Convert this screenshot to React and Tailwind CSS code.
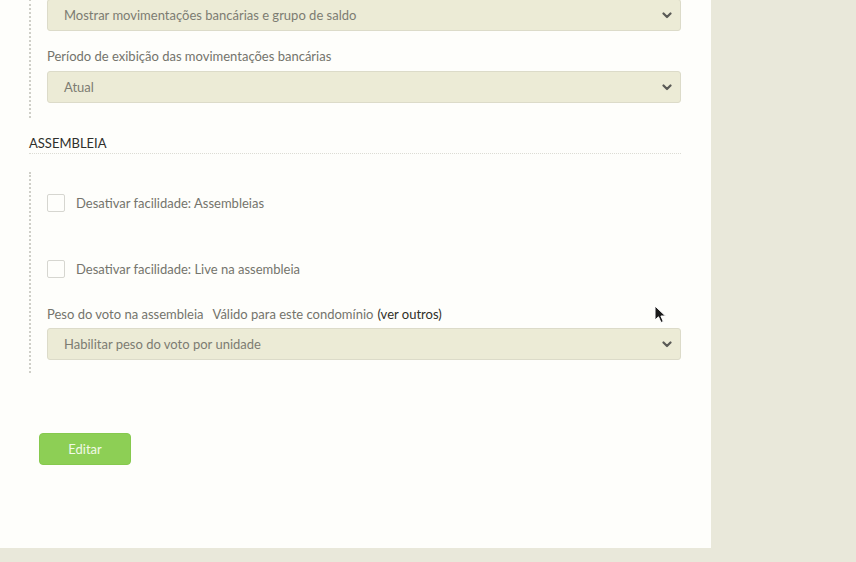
import React from "react";

function Chevron() {
  return (
    <svg width="10" height="7" viewBox="0 0 10 7" className="shrink-0 -mt-[1px]">
      <path d="M1.5 1.5 L5 5 L8.5 1.5" fill="none" stroke="#5a5a56" strokeWidth="2.2" strokeLinecap="round" strokeLinejoin="round" />
    </svg>
  );
}

function Select({ text, className = "" }) {
  return (
    <div
      className={
        "h-[32px] w-full flex items-center justify-between pl-[16px] pr-[8px] pt-[2px] rounded-[3px] border border-[#dcdbc9] bg-[#ecebd6] text-[13px] text-[#7c7c72] " +
        className
      }
    >
      <span>{text}</span>
      <Chevron />
    </div>
  );
}

function Check({ label }) {
  return (
    <div className="flex items-center h-[18px]">
      <div className="w-[18px] h-[18px] rounded-[2px] border border-[#d6d6d0] bg-[#fefefb]" />
      <span className="ml-[11px] text-[13px] text-[#74746c] leading-[18px]">{label}</span>
    </div>
  );
}

export default function App() {
  return (
    <div
      className="relative w-[856px] h-[562px] overflow-hidden bg-[#e9e8da]"
      style={{ fontFamily: "Lato, 'Open Sans', sans-serif" }}
    >
      <div className="w-[711px] h-[548px] bg-[#fefefb] pl-[29px] flex flex-col">
        {/* Section 1 */}
        <div className="w-[652px] -mt-[1px] border-l-2 border-dotted border-[#cfcfc8] pl-[16px] pb-[15px]">
          <Select text="Mostrar movimentações bancárias e grupo de saldo" />
          <div className="mt-[16px] h-[18px] leading-[18px] text-[13px] text-[#74746c]">
            Período de exibição das movimentações bancárias
          </div>
          <Select text="Atual" className="mt-[6px]" />
        </div>

        {/* Heading */}
        <div className="w-[652px] mt-[16px] h-[20px] leading-[19px] border-b border-dotted border-[#dcdcd4] text-[13px] text-[#2f2f2c]">
          ASSEMBLEIA
        </div>

        {/* Section 2 */}
        <div className="w-[652px] mt-[18px] border-l-2 border-dotted border-[#cfcfc8] pl-[16px] pt-[22px] pb-[13px]">
          <Check label="Desativar facilidade: Assembleias" />
          <div className="mt-[48px]">
            <Check label="Desativar facilidade: Live na assembleia" />
          </div>
          <div className="mt-[27px] h-[18px] leading-[18px] text-[13px] text-[#74746c] flex">
            <span>Peso do voto na assembleia</span>
            <span className="ml-[9px]">Válido para este condomínio</span>
            <span className="ml-[4px] text-[#2f2f28]">(ver outros)</span>
          </div>
          <Select text="Habilitar peso do voto por unidade" className="mt-[5px]" />
        </div>

        <div className="mt-[60px] ml-[10px]">
          <button className="w-[92px] h-[32px] pt-[1px] rounded-[4px] bg-[#8dcf55] border border-[#86c94e] text-[13px] text-[#f2f9e8]">
            Editar
          </button>
        </div>
      </div>

      {/* mouse cursor */}
      <svg
        className="absolute left-[654px] top-[305px]"
        width="14"
        height="20"
        viewBox="0 0 14 20"
      >
        <path
          d="M1 1 L1 15 L4.5 11.8 L7 17.5 L9.3 16.5 L6.9 11 L11.5 11 Z"
          fill="#1a1a1a"
          stroke="#ffffff"
          strokeWidth="1"
          strokeLinejoin="round"
        />
      </svg>
    </div>
  );
}
